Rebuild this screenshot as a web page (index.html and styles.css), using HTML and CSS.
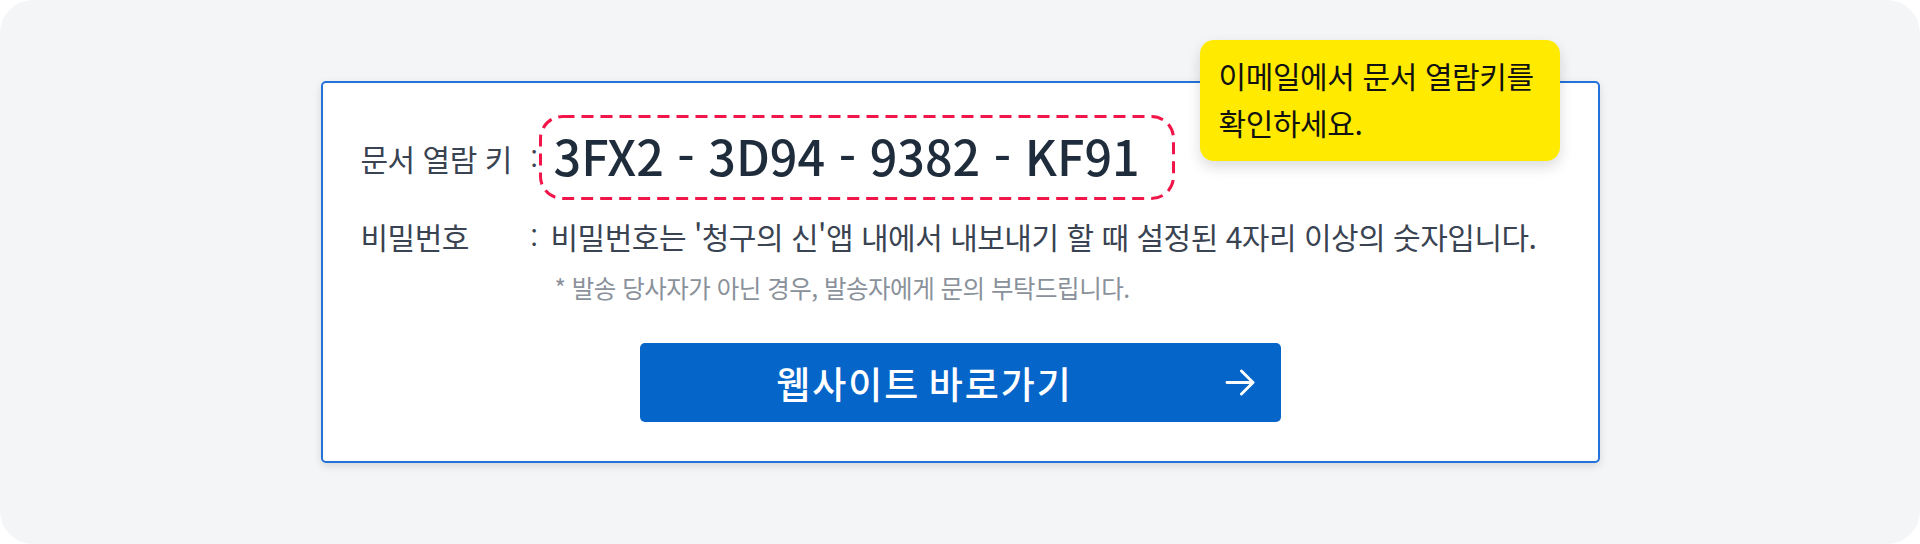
FILE: index.html
```html
<!DOCTYPE html>
<html lang="ko">

<head>
    <meta charset="UTF-8">
    <meta name="viewport" content="width=device-width, initial-scale=1.0">
    <title>문서 열람</title>
    <link rel="stylesheet" href="styles.css">
</head>

<body>
    <main class="panel">
        <section class="card">
            <div class="tooltip">이메일에서 문서 열람키를<br>확인하세요.</div>

            <div class="row row-key">
                <span class="label">문서 열람 키</span>
                <span class="colon">:</span>
                <div class="key-box">
                    <svg class="dash" aria-hidden="true">
                        <rect class="dash-rect" x="1.5" y="1.5" rx="22" ry="22"></rect>
                    </svg>
                    <span class="key">3FX2 - 3D94 - 9382 - KF91</span>
                </div>
            </div>

            <div class="row row-pw">
                <span class="label">비밀번호</span>
                <span class="colon">:</span>
                <span class="value">비밀번호는 '청구의 신'앱 내에서 내보내기 할 때 설정된 4자리 이상의 숫자입니다.</span>
            </div>

            <p class="note">* 발송 당사자가 아닌 경우, 발송자에게 문의 부탁드립니다.</p>

            <a class="go-btn" href="#">
                <span class="go-text">웹사이트 바로가기</span>
                <svg class="go-arrow" viewBox="0 0 32 28" aria-hidden="true">
                    <path d="M2 14 H29 M17 2 L29 14 L17 26" fill="none" stroke="#fff" stroke-width="3" stroke-linecap="round" stroke-linejoin="round" />
                </svg>
            </a>
        </section>
    </main>
</body>

</html>
```

FILE: styles.css
```css
html,
body {
    height: 100%;
    width: 100%;
    margin: 0;
    padding: 0;
}

body {
    background: #ffffff;
    font-family: "Noto Sans CJK KR", "Noto Sans", sans-serif;
}

.panel {
    height: 100%;
    border-radius: 33px;
    background: #f4f5f7;
    display: flex;
    justify-content: center;
    align-items: center;
}

.card {
    position: relative;
    box-sizing: border-box;
    width: 1279px;
    height: 382px;
    padding: 32px 38px 38px;
    background: #ffffff;
    border: 2px solid #2372d9;
    border-radius: 5px;
    box-shadow: 0 3px 8px rgba(0, 0, 0, 0.12);
    display: flex;
    flex-direction: column;
}

.tooltip {
    position: absolute;
    top: -43px;
    right: 38px;
    box-sizing: border-box;
    width: 360px;
    height: 121px;
    padding: 12px 19px;
    background: #ffea00;
    border-radius: 14px;
    box-shadow: 0 6px 14px rgba(0, 0, 0, 0.14);
    color: #111111;
    font-size: 30px;
    line-height: 47px;
    letter-spacing: -0.4px;
    white-space: nowrap;
}

.row {
    display: flex;
    align-items: center;
}

.label {
    width: 170px;
    flex: none;
    color: #3a4351;
    font-size: 30px;
    letter-spacing: -0.5px;
}

.colon {
    width: 8px;
    flex: none;
    color: #3a4351;
    font-size: 26px;
}

.key-box {
    position: relative;
    box-sizing: border-box;
    width: 636px;
    height: 85px;
    padding: 0 0 4px 15px;
    display: flex;
    align-items: center;
}

.dash {
    position: absolute;
    left: 0;
    top: 0;
    width: 100%;
    height: 100%;
    overflow: visible;
}

.dash-rect {
    width: calc(100% - 3px);
    height: calc(100% - 3px);
    fill: none;
    stroke: #f2154a;
    stroke-width: 3;
    stroke-dasharray: 12 7;
}

.key {
    color: #1f2c3c;
    font-size: 48.5px;
    font-weight: 500;
    line-height: 1;
    white-space: nowrap;
}

.row-pw {
    margin-top: 18px;
    height: 36px;
}

.value {
    padding-left: 12px;
    color: #3a4351;
    font-size: 30px;
    letter-spacing: -0.5px;
    white-space: nowrap;
}

.note {
    margin: 20px 0 0 194px;
    color: #8a919b;
    font-size: 24.5px;
    line-height: 28px;
    letter-spacing: -0.5px;
}

.go-btn {
    margin: 41px auto 0;
    box-sizing: border-box;
    width: 641px;
    height: 79px;
    padding: 0 25px;
    display: flex;
    align-items: center;
    background: #0565c9;
    border-radius: 5px;
    color: #ffffff;
    text-decoration: none;
}

.go-text {
    flex: 1;
    text-align: center;
    font-size: 37px;
    font-weight: 500;
    letter-spacing: 2px;
    word-spacing: -4px;
}

.go-arrow {
    width: 31px;
    height: 27px;
    margin-left: 40px;
}
```
